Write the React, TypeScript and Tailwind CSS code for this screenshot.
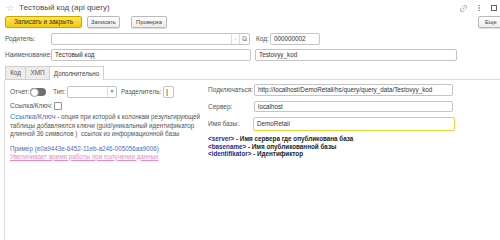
import { Link2, MoreVertical } from "lucide-react";

function Input({
  value,
  className = "",
}: {
  value?: string;
  className?: string;
}) {
  return (
    <div
      className={`flex items-center overflow-hidden whitespace-nowrap rounded-[2px] border border-[#c4c4c4] bg-white pl-[3px] text-[6.3px] text-[#333] ${className}`}
    >
      {value}
    </div>
  );
}

function Button({ label, className = "" }: { label: string; className?: string }) {
  return (
    <div
      className={`flex h-[12px] items-center justify-center whitespace-nowrap rounded-[2px] border border-[#b9b9b9] bg-linear-to-b from-white to-[#ececec] text-[5.8px] text-[#444] shadow-[0_1px_0_#ddd] ${className}`}
    >
      {label}
    </div>
  );
}

export default function App() {
  return (
    <div className="flex h-[240px] w-[500px] flex-col overflow-hidden whitespace-nowrap bg-white font-['Liberation_Sans',Arial,sans-serif] text-[#555]">
      {/* title */}
      <div className="flex h-[16px] items-center">
        <span className="ml-[6px] text-[9px] leading-none text-[#b5b5b5]">☆</span>
        <span className="ml-[5px] text-[8px] leading-none text-[#4a4a4a]">
          Тестовый код (api query)
        </span>
        <div className="ml-auto mr-[3px] flex items-center text-[#777]">
          <Link2 size={9} className="-rotate-45" strokeWidth={1.5} />
          <MoreVertical size={8} className="ml-[7px]" strokeWidth={2} />
          <div className="ml-[8px] h-[6px] w-[6px] border border-[#666]" />
        </div>
      </div>

      {/* command bar */}
      <div className="flex h-[12px] pl-[5px]">
        <div className="flex h-[12px] w-[77px] items-center justify-center rounded-[2px] border border-[#c9a700] bg-linear-to-b from-[#fde84e] to-[#f2ca0a] text-[6.5px] text-[#3a3000]">
          Записать и закрыть
        </div>
        <Button label="Записать" className="ml-[5px] w-[33px]" />
        <Button label="Проверка" className="ml-[11px] w-[36px]" />
        <Button label="Еще" className="-mr-[4px] ml-auto w-[26px] justify-start pl-[6px]" />
      </div>

      {/* Родитель */}
      <div className="mt-[5px] flex h-[12px] items-center pl-[5px] text-[6.5px]">
        <span className="w-[46px]">Родитель:</span>
        <div className="flex h-[12px] w-[199px] items-center rounded-[2px] border border-[#c4c4c4] bg-white">
          <div className="flex-1" />
          <div className="flex h-full w-[8px] items-center justify-center border-l border-[#ddd] text-[6px] text-[#888]">
            -
          </div>
          <div className="flex h-full w-[10px] items-center justify-center border-l border-[#ddd] text-[7px] text-[#888]">
            ⧉
          </div>
        </div>
        <span className="ml-[6px] w-[14px]">Код:</span>
        <Input value="000000002" className="h-[12px] w-[50px]" />
      </div>

      {/* Наименование */}
      <div className="mt-[4px] flex h-[12px] items-center pl-[5px] text-[6.5px]">
        <span className="w-[46px]">Наименование:</span>
        <Input value="Тестовый код" className="h-[12px] w-[200px]" />
        <Input value="Testovyy_kod" className="ml-[4px] h-[12px] w-[202px]" />
      </div>

      {/* tabs */}
      <div className="mt-[5px] flex h-[14px] pl-[5px] text-[6.3px]">
        <div className="flex w-[20px] items-center justify-center border border-r-0 border-[#cfcfcf] bg-[#ececec]">
          Код
        </div>
        <div className="flex w-[24px] items-center justify-center border border-r-0 border-[#cfcfcf] bg-[#ececec]">
          ХМП
        </div>
        <div className="flex w-[55px] items-center justify-center border border-b-0 border-[#cfcfcf] bg-white text-[#444]">
          Дополнительно
        </div>
        <div className="flex-1 border-b border-[#dcdcdc]" />
      </div>

      {/* panel */}
      <div className="ml-[4px] flex flex-1 border-l border-[#dadada]">
        {/* left column */}
        <div className="flex w-[203px] flex-col pl-[5px]">
          <div className="mt-[6px] flex h-[12px] items-center text-[6.5px]">
            <span className="w-[20px]">Отчет:</span>
            <div className="flex h-[8px] w-[16px] items-center rounded-full bg-[#707070]">
              <div className="h-[9px] w-[9px] rounded-full border border-[#9a9a9a] bg-white" />
            </div>
            <span className="ml-[7px] w-[14px]">Тип:</span>
            <div className="flex h-[12px] w-[50px] items-center rounded-[2px] border border-[#c4c4c4] bg-white">
              <div className="flex-1" />
              <div className="flex h-full w-[9px] items-center justify-center border-l border-[#ddd] text-[5px] text-[#777]">
                ▼
              </div>
            </div>
            <span className="ml-[4px] w-[42px]">Разделитель:</span>
            <div className="flex h-[12px] w-[11px] items-center rounded-[2px] border border-[#c4c4c4] bg-white pl-[2px] text-[8px] text-[#333]">
              |
            </div>
          </div>
          <div className="mt-[3px] flex h-[9px] items-center text-[6.5px]">
            <span className="w-[44px]">Ссылка/Ключ:</span>
            <div className="h-[8px] w-[8px] rounded-[1px] border border-[#8f8f8f] bg-white" />
          </div>
          <div className="mt-[3px] text-[6.3px] leading-[8.5px] text-[#555]">
            <div>
              <span className="text-[7.3px] text-[#3b73c9]">Ссылка/Ключ</span> - опция при которой к колонкам
              результирующей
            </div>
            <div>таблицы добавляются ключи (guid/уникальный идентификатор</div>
            <div>длинной 36 символов )&nbsp; ссылок из информационной базы</div>
          </div>
          <div className="mt-[6px] text-[6.3px] leading-[8px] text-[#4b6fb8]">
            Пример (e0a9443e-6452-11eb-a246-005056aa9006)
          </div>
          <div className="text-[6.3px] leading-[8px] text-[#e58bc6] underline">
            Увеличивает время работы при получении данных
          </div>
        </div>

        {/* right column */}
        <div className="flex flex-col">
          <div className="mt-[4px] flex h-[12px] items-center text-[6.5px]">
            <span className="w-[46px]">Подключаться:</span>
            <Input
              value="http://localhost/DemoRetail/hs/query/query_data/Testovyy_kod"
              className="h-[12px] w-[199px]"
            />
          </div>
          <div className="mt-[5px] flex h-[11px] items-center text-[6.5px]">
            <span className="w-[46px]">Сервер:</span>
            <Input value="localhost" className="h-[11px] w-[199px]" />
          </div>
          <div className="mt-[5px] flex h-[14px] items-center text-[6.5px]">
            <span className="w-[45px]">Имя базы:</span>
            <div className="flex h-[14px] w-[202px] items-center rounded-[2px] border-[1.5px] border-[#f3cf33] bg-white pl-[3px] text-[6.3px] text-[#333]">
              DemoRetail
            </div>
          </div>
          <div className="mt-[4px] text-[6.3px] font-bold leading-[7.7px] text-[#222]">
            <div>
              <span className="text-[#1c2a8c]">&lt;server&gt;</span> - Имя сервера где опубликована база
            </div>
            <div>
              <span className="text-[#1c2a8c]">&lt;basename&gt;</span> - Имя опубликованной базы
            </div>
            <div>
              <span className="text-[#1c2a8c]">&lt;identifikator&gt;</span> - Идентификтор
            </div>
          </div>
        </div>
      </div>
    </div>
  );
}
